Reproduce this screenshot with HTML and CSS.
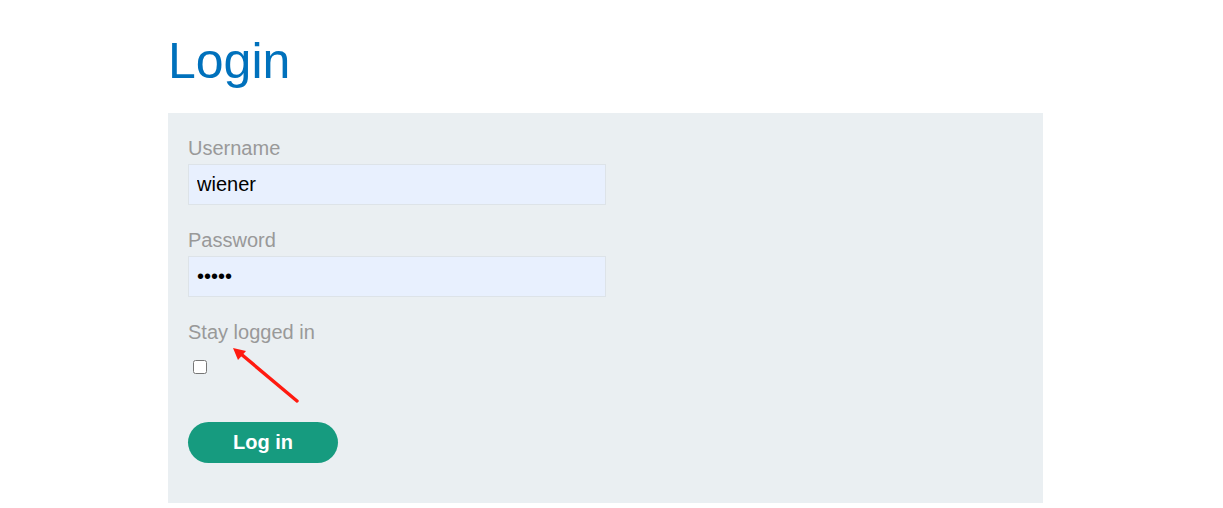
FILE: index.html
```html
<!DOCTYPE html>
<html lang="en">
<head>
<meta charset="utf-8">
<title>Login</title>
<link rel="stylesheet" href="styles.css">
</head>
<body>
<main class="page">
  <h1 class="title">Login</h1>
  <section class="panel">
    <form class="login-form">
      <label class="field-label" for="username">Username</label>
      <input class="field-input" id="username" type="text" value="wiener">
      <label class="field-label" for="password">Password</label>
      <input class="field-input" id="password" type="password" value="peter">
      <label class="field-label" for="stay">Stay logged in</label>
      <input class="checkbox" id="stay" type="checkbox">
      <button class="btn" type="button">Log in</button>
    </form>
  </section>
</main>
<svg class="annotation" width="1223" height="508" viewBox="0 0 1223 508" aria-hidden="true">
  <line x1="297" y1="401" x2="241" y2="354" stroke="#ff1a10" stroke-width="3.4" stroke-linecap="round"/>
  <polygon points="233,348 246,351 238,360" fill="#ff1a10"/>
</svg>
</body>
</html>
```
FILE: styles.css
```css
html, body {
  margin: 0;
  padding: 0;
  background: #ffffff;
}
body {
  font-family: "Liberation Sans", Arial, sans-serif;
  position: relative;
  width: 1223px;
  height: 508px;
  overflow: hidden;
}
.page {
  margin-left: 168px;
  width: 875px;
  padding-top: 33px;
}
.title {
  margin: 0 0 24px 0;
  font-size: 50px;
  line-height: 56px;
  font-weight: normal;
  color: #0071bc;
}
.panel {
  background: #eaeff2;
  padding: 23px 20px 40px 20px;
}
.login-form {
  display: flex;
  flex-direction: column;
  align-items: flex-start;
}
.field-label {
  font-size: 20px;
  line-height: 24px;
  color: #999999;
  margin-bottom: 4px;
}
.field-input {
  box-sizing: border-box;
  width: 418px;
  height: 41px;
  margin: 0 0 23px 0;
  padding: 0 8px;
  border: 1px solid #dde3e8;
  background: #e8f0fe;
  font-family: "Liberation Sans", Arial, sans-serif;
  font-size: 20px;
  color: #000000;
  outline: none;
}
.checkbox {
  width: 14px;
  height: 14px;
  margin: 12px 0 0 5px;
}
.btn {
  margin-top: 48px;
  width: 150px;
  height: 41px;
  border: none;
  border-radius: 21px;
  background: #169b7f;
  color: #ffffff;
  font-family: "Liberation Sans", Arial, sans-serif;
  font-size: 20px;
  font-weight: bold;
  cursor: pointer;
}
.annotation {
  position: absolute;
  left: 0;
  top: 0;
  pointer-events: none;
}
```
